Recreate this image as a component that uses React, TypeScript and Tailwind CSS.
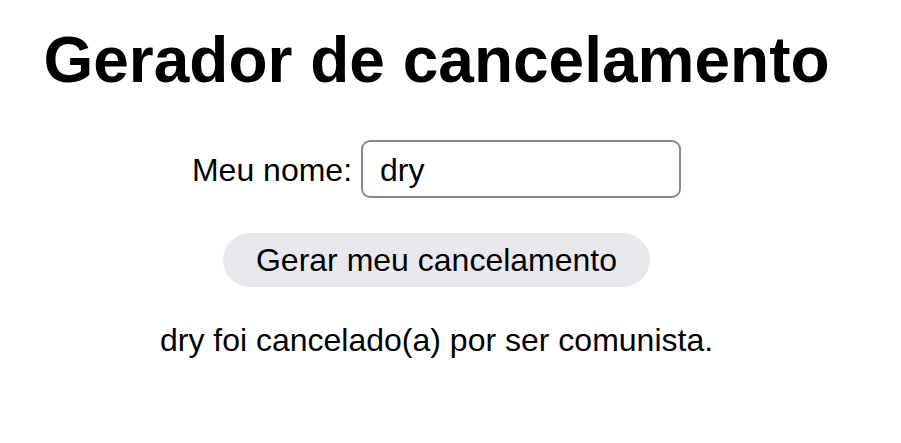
import { useState } from 'react';

const App = () => {
  const [nome, setNome] = useState('dry');
  const [resultado] = useState('dry foi cancelado(a) por ser comunista.');

  return (
    <div className="w-[873px] text-center text-black font-['Liberation_Sans',Arial,sans-serif]">
      <h1 className="mt-[24px] text-[64px] leading-[72px] font-bold">Gerador de cancelamento</h1>
      <div className="mt-[44px] flex items-center justify-center text-[32px] leading-[37px]">
        <label htmlFor="nome" className="pt-[3px]">Meu nome:</label>
        <input
          id="nome"
          value={nome}
          onChange={(e) => setNome(e.target.value)}
          className="ml-[9px] w-[320px] h-[58px] border-2 border-[#8a8a8a] rounded-[9px] pl-[17px] pt-[2px] text-[32px] outline-none bg-white"
        />
      </div>
      <div className="mt-[35px] flex justify-center">
        <button className="w-[427px] h-[54px] rounded-full bg-[#e9e9ed] text-[32px] leading-[37px] pt-[1px]">
          Gerar meu cancelamento
        </button>
      </div>
      <p className="mt-[35px] text-[32px] leading-[37px]">{resultado}</p>
    </div>
  );
};

export default App;
